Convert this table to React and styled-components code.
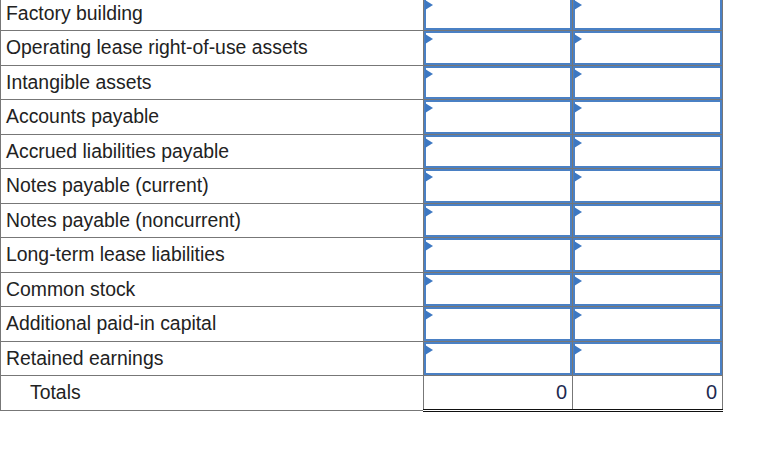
import React from "react";
import styled, { createGlobalStyle } from "styled-components";

const GlobalStyle = createGlobalStyle`
  html, body {
    margin: 0;
    padding: 0;
    background: #fff;
  }
  body {
    font-family: "Liberation Sans", Arial, sans-serif;
    color: #222;
  }
`;

const Sheet = styled.table`
  border-collapse: collapse;
  table-layout: fixed;
  width: 722px;
  margin-top: -4.5px;
`;

const Column = styled.col`
  width: ${(p) => p.$w}px;
`;

const Row = styled.tr`
  height: 34.5px;
`;

const Label = styled.td`
  border: 1px solid #777;
  padding: 0 0 0 ${(p) => (p.$indent ? "29px" : "5px")};
  font-size: 19.4px;
  line-height: 1;
  vertical-align: middle;
  white-space: nowrap;
  overflow: hidden;
`;

const EntryCell = styled.td`
  border: 1px solid #777;
  padding: 0;
  position: relative;
  vertical-align: top;
`;

const EntryBox = styled.input`
  display: block;
  box-sizing: border-box;
  width: 100%;
  height: 33.5px;
  margin: 0;
  border: 2px solid #4a80c4;
  border-radius: 0;
  background: #fff;
  outline: none;
  font: inherit;
  font-size: 18px;
  padding: 0 6px;
`;

const Marker = styled.span`
  position: absolute;
  left: 1px;
  top: 3px;
  width: 0;
  height: 0;
  border-top: 5px solid transparent;
  border-bottom: 5px solid transparent;
  border-left: 8px solid #3d78c2;
`;

const TotalCell = styled.td`
  border-left: 1px solid #777;
  border-right: 1px solid #777;
  border-top: 1px solid #111;
  border-bottom: 3px double #111;
  padding: 0 5px 0 0;
  text-align: right;
  font-size: 20px;
  color: #1e2a50;
  vertical-align: middle;
`;

const accounts = [
  "Factory building",
  "Operating lease right-of-use assets",
  "Intangible assets",
  "Accounts payable",
  "Accrued liabilities payable",
  "Notes payable (current)",
  "Notes payable (noncurrent)",
  "Long-term lease liabilities",
  "Common stock",
  "Additional paid-in capital",
  "Retained earnings",
];

const Entry = () => (
  <EntryCell>
    <EntryBox type="text" />
    <Marker />
  </EntryCell>
);

const App = () => {
  const totals = [0, 0];

  return (
    <>
      <GlobalStyle />
      <Sheet>
        <colgroup>
          <Column $w={423} />
          <Column $w={149} />
          <Column $w={150} />
        </colgroup>
        <tbody>
          {accounts.map((name) => (
            <Row key={name}>
              <Label>{name}</Label>
              <Entry />
              <Entry />
            </Row>
          ))}
          <Row>
            <Label $indent>Totals</Label>
            {totals.map((t, i) => (
              <TotalCell key={i}>{t}</TotalCell>
            ))}
          </Row>
        </tbody>
      </Sheet>
    </>
  );
};

export default App;
